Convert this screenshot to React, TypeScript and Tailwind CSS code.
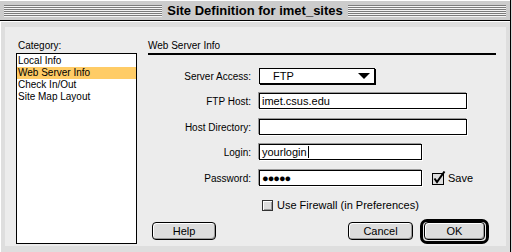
function Stripes() {
  return (
    <div className="flex-1 flex flex-col">
      {[0, 1, 2, 3, 4, 5].map(i => (
        <div key={i} className="flex flex-col">
          <div className="h-px bg-[#7c7c7c]" />
          <div className="h-px bg-[#f4f4f4]" />
        </div>
      ))}
    </div>
  )
}

function Field({ w, children }: { w: string; children?: React.ReactNode }) {
  return (
    <div
      className={`${w} h-[16px] bg-white border border-black shadow-[-1px_-1px_0_#9a9a9a,1px_1px_0_#ffffff] flex items-center pl-[2px] text-[11px] leading-[14px]`}
    >
      {children}
    </div>
  )
}

function Row({ label, children, mt }: { label: string; children: React.ReactNode; mt: string }) {
  return (
    <div className={`${mt} flex items-center`}>
      <div className="w-[104px] text-right pr-[1px]">{label}</div>
      <div className="ml-[7px] flex items-center">{children}</div>
    </div>
  )
}

function MacButton({ label, w }: { label: string; w: string }) {
  return (
    <div
      className={`${w} h-[18px] rounded-[4px] border border-black bg-[#dddddd] shadow-[inset_1px_1px_0_#ffffff,inset_-1px_-1px_0_#9a9a9a] flex items-center justify-center text-[11px]`}
    >
      {label}
    </div>
  )
}

export default function App() {
  const items = ['Local Info', 'Web Server Info', 'Check In/Out', 'Site Map Layout']

  return (
    <div className="w-[512px] h-[252px] bg-[#d6d6d6] overflow-hidden font-['Liberation_Sans',Arial,sans-serif] text-[10px] text-black">
      <div className="w-[511px] h-[252px] border-r border-black flex flex-col">
        {/* title bar */}
        <div className="h-[21px] shrink-0 bg-[#cccccc] border-t border-t-white border-b border-b-black flex items-center px-[4px]">
          <Stripes />
          <div className="px-[5px] text-[13px] font-bold leading-[16px]">Site Definition for imet_sites</div>
          <Stripes />
        </div>

        {/* body */}
        <div className="flex-1 border-t border-l border-white pt-[5px] pl-[4px] pr-[4px] pb-[6px] bg-[#dedede]">
          <div className="h-full bg-[#ececec] flex">
            {/* category column */}
            <div className="ml-[11px] w-[121px] pt-[12px] flex flex-col">
              <div className="leading-[13px] pl-[2px]">Category:</div>
              <div className="mt-[1px] h-[191px] bg-white border border-black pt-[1px]">
                {items.map(it => (
                  <div
                    key={it}
                    className={`h-[12px] leading-[12px] pl-[1px] text-[10px] ${it === 'Web Server Info' ? 'bg-[#ffcc66]' : ''}`}
                  >
                    {it}
                  </div>
                ))}
              </div>
            </div>

            {/* settings column */}
            <div className="ml-[11px] w-[348px] pt-[12px] flex flex-col">
              <div className="leading-[14px]">Web Server Info</div>
              <div className="h-[2px] bg-black" />

              <Row label="Server Access:" mt="mt-[13px]">
                <div className="w-[116px] h-[16px] bg-white border border-black shadow-[1px_1px_0_#000] flex items-center pl-[13px] pr-[4px] text-[11px]">
                  <span className="flex-1">FTP</span>
                  <svg width="12" height="6" viewBox="0 0 12 6">
                    <path d="M0 0 H12 L6 6 Z" fill="#000" />
                  </svg>
                </div>
              </Row>

              <Row label="FTP Host:" mt="mt-[9px]">
                <Field w="w-[208px]">imet.csus.edu</Field>
              </Row>

              <Row label="Host Directory:" mt="mt-[10px]">
                <Field w="w-[208px]" />
              </Row>

              <Row label="Login:" mt="mt-[9px]">
                <Field w="w-[163px]">
                  yourlogin<span className="ml-px inline-block w-px h-[12px] bg-black" />
                </Field>
              </Row>

              <Row label="Password:" mt="mt-[10px]">
                <Field w="w-[163px]">
                  <span className="text-[11px] tracking-[-1px] leading-[12px]">●●●●●</span>
                </Field>
                <div className="ml-[10px] flex items-center">
                  <svg width="14" height="14" viewBox="0 0 14 14">
                    <rect x="0.5" y="2.5" width="11" height="11" fill="#dddddd" stroke="#000" />
                    <path d="M2.5 7.5 L5 11 L12.5 0.5" fill="none" stroke="#000" strokeWidth="2" />
                  </svg>
                  <span className="ml-[2px] text-[11px]">Save</span>
                </div>
              </Row>

              <div className="mt-[13px] flex items-center pl-[114px]">
                <div className="w-[11px] h-[11px] border border-[#333] bg-[#dddddd] shadow-[inset_1px_1px_0_#fff,inset_-1px_-1px_0_#999]" />
                <span className="ml-[4px] text-[11px] leading-[11px]">Use Firewall (in Preferences)</span>
              </div>

              <div className="mt-[8px] h-[25px] flex items-center pl-[4px] pr-[7px]">
                <MacButton label="Help" w="w-[64px]" />
                <div className="flex-1" />
                <MacButton label="Cancel" w="w-[65px]" />
                <div className="ml-[7px] w-[69px] h-[25px] rounded-[7px] border-[3px] border-black bg-[#e6e6e6] flex items-center justify-center">
                  <MacButton label="OK" w="w-[61px]" />
                </div>
              </div>
            </div>
          </div>
        </div>
      </div>
    </div>
  )
}
